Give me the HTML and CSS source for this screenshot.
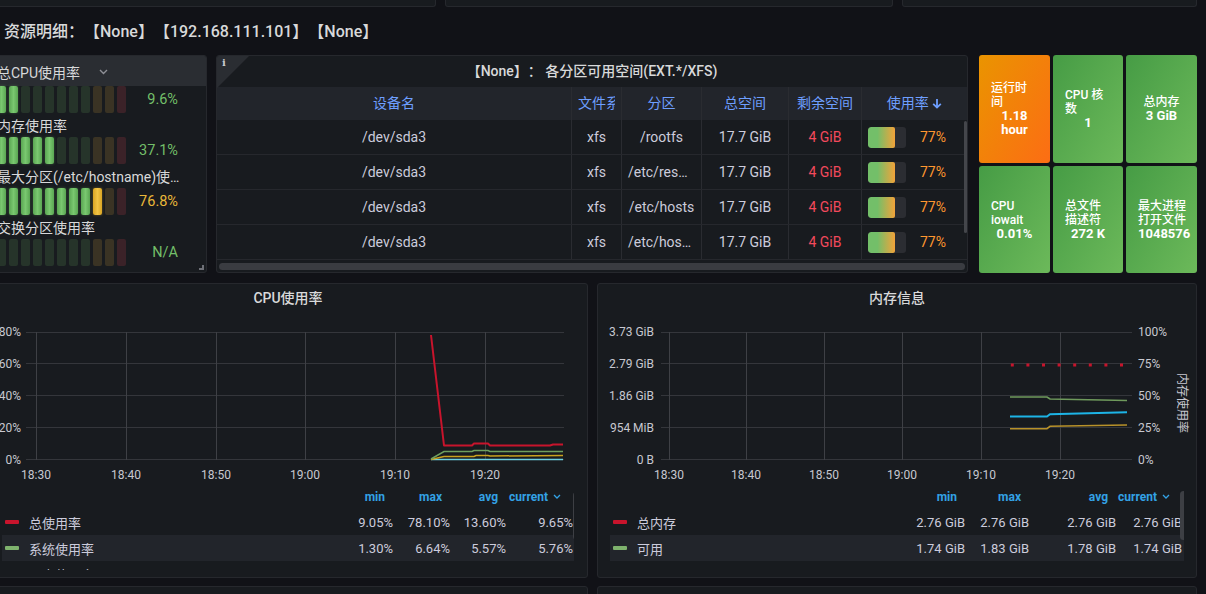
FILE: index.html
```html
<!DOCTYPE html>
<html lang="zh-CN">
<head>
<meta charset="utf-8">
<title>资源明细</title>
<link rel="stylesheet" href="styles.css">
</head>
<body>
<div class="dash">
  <div class="strip-top">
    <div class="panel stub"></div>
    <div class="panel stub"></div>
    <div class="panel stub"></div>
  </div>

  <div class="row-title">资源明细：【None】【192.168.111.101】【None】</div>

  <div class="grid1">
    <section class="panel bargauge">
      <div class="bg-header"><span>总CPU使用率</span><svg class="chev" width="9" height="6" viewBox="0 0 9 6"><polyline points="1,1 4.5,4.5 8,1" fill="none" stroke="#8e8f96" stroke-width="1.4"/></svg></div>
      <div class="bg-bar">
        <div class="cells"><i class="c gon"></i><i class="c gon"></i><i class="c g"></i><i class="c g"></i><i class="c g"></i><i class="c g"></i><i class="c g"></i><i class="c g"></i><i class="c y"></i><i class="c y"></i><i class="c r"></i></div>
        <div class="val green">9.6%</div>
      </div>
      <div class="bg-label">内存使用率</div>
      <div class="bg-bar">
        <div class="cells"><i class="c gon"></i><i class="c gon"></i><i class="c gon"></i><i class="c gon"></i><i class="c gon"></i><i class="c g"></i><i class="c g"></i><i class="c g"></i><i class="c y"></i><i class="c y"></i><i class="c r"></i></div>
        <div class="val green">37.1%</div>
      </div>
      <div class="bg-label narrow">最大分区(/etc/hostname)使用率</div>
      <div class="bg-bar">
        <div class="cells"><i class="c gon"></i><i class="c gon"></i><i class="c gon"></i><i class="c gon"></i><i class="c gon"></i><i class="c gon"></i><i class="c gon"></i><i class="c gon"></i><i class="c yon"></i><i class="c y"></i><i class="c r"></i></div>
        <div class="val yellow">76.8%</div>
      </div>
      <div class="bg-label">交换分区使用率</div>
      <div class="bg-bar">
        <div class="cells"><i class="c g"></i><i class="c g"></i><i class="c g"></i><i class="c g"></i><i class="c g"></i><i class="c g"></i><i class="c g"></i><i class="c g"></i><i class="c y"></i><i class="c y"></i><i class="c r"></i></div>
        <div class="val green">N/A</div>
      </div>
      <span class="resize"></span>
    </section>

    <section class="panel tablepanel">
      <div class="info-corner"></div>
      <span class="info-i">i</span>
      <div class="ptitle">【None】： 各分区可用空间(EXT.*/XFS)</div>
      <div class="tbl">
        <div class="trow thead">
          <div class="tc"><span class="clip">设备名</span></div>
          <div class="tc"><span class="clip">文件系统</span></div>
          <div class="tc"><span class="clip">分区</span></div>
          <div class="tc"><span class="clip">总空间</span></div>
          <div class="tc"><span class="clip">剩余空间</span></div>
          <div class="tc last"><span class="clip">使用率 <svg class="sort" width="10" height="11" viewBox="0 0 10 11"><path d="M5 1 V9.5 M1.2 5.8 L5 9.6 L8.8 5.8" fill="none" stroke="#6e9fff" stroke-width="1.8"/></svg></span></div>
        </div>
        <div class="trow">
          <div class="tc">/dev/sda3</div><div class="tc">xfs</div><div class="tc">/rootfs</div><div class="tc">17.7 GiB</div><div class="tc red">4 GiB</div>
          <div class="tc last use"><span class="ubar"><span class="ufill"></span></span><span class="upct">77%</span></div>
        </div>
        <div class="trow">
          <div class="tc">/dev/sda3</div><div class="tc">xfs</div><div class="tc">/etc/resolv.conf</div><div class="tc">17.7 GiB</div><div class="tc red">4 GiB</div>
          <div class="tc last use"><span class="ubar"><span class="ufill"></span></span><span class="upct">77%</span></div>
        </div>
        <div class="trow">
          <div class="tc">/dev/sda3</div><div class="tc">xfs</div><div class="tc">/etc/hosts</div><div class="tc">17.7 GiB</div><div class="tc red">4 GiB</div>
          <div class="tc last use"><span class="ubar"><span class="ufill"></span></span><span class="upct">77%</span></div>
        </div>
        <div class="trow">
          <div class="tc">/dev/sda3</div><div class="tc">xfs</div><div class="tc">/etc/hostname</div><div class="tc">17.7 GiB</div><div class="tc red">4 GiB</div>
          <div class="tc last use"><span class="ubar"><span class="ufill"></span></span><span class="upct">77%</span></div>
        </div>
      </div>
      <div class="hscroll"></div>
      <span class="vscroll"></span>
    </section>

    <div class="stats">
      <div class="stat orange"><div class="st"><div class="st-title">运行时<br>间</div><div class="st-val">1.18 hour</div></div></div>
      <div class="stat green-bg"><div class="st"><div class="st-title">CPU 核<br>数</div><div class="st-val">1</div></div></div>
      <div class="stat green-bg"><div class="st"><div class="st-title center">总内存</div><div class="st-val">3 GiB</div></div></div>
      <div class="stat green-bg"><div class="st"><div class="st-title">CPU<br>iowait</div><div class="st-val">0.01%</div></div></div>
      <div class="stat green-bg"><div class="st"><div class="st-title">总文件<br>描述符</div><div class="st-val">272 K</div></div></div>
      <div class="stat green-bg"><div class="st"><div class="st-title">最大进程<br>打开文件</div><div class="st-val">1048576</div></div></div>
    </div>
  </div>

  <div class="grid2">
    <section class="panel chart">
      <div class="ctitle">CPU使用率</div>
      <svg class="plot" width="598" height="173" viewBox="-11 312 598 173">
        <g class="grid">
          <line x1="26" x2="564" y1="332.5" y2="332.5"/>
          <line x1="26" x2="564" y1="363.5" y2="363.5"/>
          <line x1="26" x2="564" y1="395.5" y2="395.5"/>
          <line x1="26" x2="564" y1="427.5" y2="427.5"/>
          <line x1="26" x2="564" y1="459.5" y2="459.5"/>
          <line class="v" x1="36.5" x2="36.5" y1="332" y2="460"/>
          <line class="v" x1="126.5" x2="126.5" y1="332" y2="460"/>
          <line class="v" x1="216.5" x2="216.5" y1="332" y2="460"/>
          <line class="v" x1="305.5" x2="305.5" y1="332" y2="460"/>
          <line class="v" x1="395.5" x2="395.5" y1="332" y2="460"/>
          <line class="v" x1="485.5" x2="485.5" y1="332" y2="460"/>
        </g>
        <g class="ax" text-anchor="end">
          <text x="21" y="336">80%</text>
          <text x="21" y="367.5">60%</text>
          <text x="21" y="399.5">40%</text>
          <text x="21" y="431.5">20%</text>
          <text x="21" y="464">0%</text>
        </g>
        <g class="ax" text-anchor="middle">
          <text x="36" y="478.5">18:30</text>
          <text x="126" y="478.5">18:40</text>
          <text x="216" y="478.5">18:50</text>
          <text x="305" y="478.5">19:00</text>
          <text x="395" y="478.5">19:10</text>
          <text x="485" y="478.5">19:20</text>
        </g>
        <polyline fill="none" stroke="#6ed0e0" stroke-width="1.5" points="431,459.5 563,459.5"/>
        <polyline fill="none" stroke="#c9a11e" stroke-width="1.5" points="431,459.5 444,456.5 474,456.5 476,455.5 488,455.5 490,456 563,455.5"/>
        <polyline fill="none" stroke="#6f9f5e" stroke-width="1.5" points="431,459 444,451.5 472,451.5 474,450.5 488,450.5 490,451.5 563,451.5"/>
        <polyline fill="none" stroke="#c8142c" stroke-width="2" stroke-linejoin="round" points="431,335 444,445.5 472,445.5 474,443.5 488,443.5 490,445.5 550,445.5 553,444.5 563,444.5"/>
      </svg>
      <div class="legend cpu-leg">
        <div class="lg-row lg-head"><span></span><span>min</span><span>max</span><span>avg</span><span class="cur">current <svg width="8" height="5" viewBox="0 0 8 5"><polyline points="1,1 4,4 7,1" fill="none" stroke="#33a2e5" stroke-width="1.3"/></svg></span></div>
        <div class="lg-row"><span class="lbl"><i class="sw" style="background:#c8142c"></i>总使用率</span><span>9.05%</span><span>78.10%</span><span>13.60%</span><span>9.65%</span></div>
        <div class="lg-row hl"><span class="lbl"><i class="sw" style="background:#7eb26d"></i>系统使用率</span><span>1.30%</span><span>6.64%</span><span>5.57%</span><span>5.76%</span></div>
        <div class="lg-row"><span class="lbl"><i class="sw" style="background:#c9a11e"></i>用户使用率</span><span>2.10%</span><span>4.85%</span><span>3.92%</span><span>3.71%</span></div>
        <span class="lscroll"></span>
      </div>
    </section>

    <section class="panel chart">
      <div class="ctitle">内存信息</div>
      <svg class="plot" width="598" height="173" viewBox="598 312 598 173">
        <g class="grid">
          <line x1="661" x2="1132" y1="332.5" y2="332.5"/>
          <line x1="661" x2="1132" y1="363.5" y2="363.5"/>
          <line x1="661" x2="1132" y1="395.5" y2="395.5"/>
          <line x1="661" x2="1132" y1="427.5" y2="427.5"/>
          <line x1="661" x2="1132" y1="459.5" y2="459.5"/>
          <line class="v" x1="669.5" x2="669.5" y1="332" y2="460"/>
          <line class="v" x1="746.5" x2="746.5" y1="332" y2="460"/>
          <line class="v" x1="824.5" x2="824.5" y1="332" y2="460"/>
          <line class="v" x1="902.5" x2="902.5" y1="332" y2="460"/>
          <line class="v" x1="981.5" x2="981.5" y1="332" y2="460"/>
          <line class="v" x1="1060.5" x2="1060.5" y1="332" y2="460"/>
        </g>
        <g class="ax" text-anchor="end">
          <text x="654" y="336">3.73 GiB</text>
          <text x="654" y="367.5">2.79 GiB</text>
          <text x="654" y="399.5">1.86 GiB</text>
          <text x="654" y="431.5">954 MiB</text>
          <text x="654" y="464">0 B</text>
        </g>
        <g class="ax" text-anchor="start">
          <text x="1138" y="336">100%</text>
          <text x="1138" y="367.5">75%</text>
          <text x="1138" y="399.5">50%</text>
          <text x="1138" y="431.5">25%</text>
          <text x="1138" y="464">0%</text>
        </g>
        <g class="ax" text-anchor="middle">
          <text x="669" y="478.5">18:30</text>
          <text x="746" y="478.5">18:40</text>
          <text x="824" y="478.5">18:50</text>
          <text x="902" y="478.5">19:00</text>
          <text x="981" y="478.5">19:10</text>
          <text x="1060" y="478.5">19:20</text>
        </g>
        <text class="ax" text-anchor="middle" transform="translate(1178 403) rotate(90)">内存使用率</text>
        <g fill="#c8142c">
          <rect x="1010.8" y="363.5" width="3" height="3"/>
          <rect x="1026.4" y="363.5" width="3" height="3"/>
          <rect x="1042" y="363.5" width="3" height="3"/>
          <rect x="1057.6" y="363.5" width="3" height="3"/>
          <rect x="1073.2" y="363.5" width="3" height="3"/>
          <rect x="1088.8" y="363.5" width="3" height="3"/>
          <rect x="1104.4" y="363.5" width="3" height="3"/>
          <rect x="1120" y="363.5" width="3" height="3"/>
        </g>
        <polyline fill="none" stroke="#6f9a5c" stroke-width="1.6" points="1010,397 1047,397 1050,399 1127,400.5"/>
        <polyline fill="none" stroke="#1db4e6" stroke-width="2" points="1010,416.5 1047,416.5 1050,414.3 1127,412.3"/>
        <polyline fill="none" stroke="#b8922a" stroke-width="1.6" points="1010,428.7 1047,428.7 1050,426.3 1127,425"/>
      </svg>
      <div class="legend mem-leg">
        <div class="lg-row lg-head"><span></span><span>min</span><span>max</span><span>avg</span><span class="cur">current <svg width="8" height="5" viewBox="0 0 8 5"><polyline points="1,1 4,4 7,1" fill="none" stroke="#33a2e5" stroke-width="1.3"/></svg></span></div>
        <div class="lg-row"><span class="lbl"><i class="sw" style="background:#c8142c"></i>总内存</span><span>2.76 GiB</span><span>2.76 GiB</span><span>2.76 GiB</span><span>2.76 GiB</span></div>
        <div class="lg-row hl"><span class="lbl"><i class="sw" style="background:#7eb26d"></i>可用</span><span>1.74 GiB</span><span>1.83 GiB</span><span>1.78 GiB</span><span>1.74 GiB</span></div>
        <div class="lg-row"><span class="lbl"><i class="sw" style="background:#b8922a"></i>已用</span><span>0.92 GiB</span><span>1.01 GiB</span><span>0.97 GiB</span><span>1.01 GiB</span></div>
        <span class="lscroll"></span>
      </div>
    </section>
  </div>

  <div class="grid3">
    <div class="panel stub2"></div>
    <div class="panel stub2"></div>
  </div>
</div>
</body>
</html>
```

FILE: styles.css
```css
* { box-sizing: border-box; }
html, body { margin: 0; padding: 0; }
body {
  background: #111217;
  color: #ccccdc;
  font-family: Roboto, "Noto Sans CJK SC", "Noto Sans", sans-serif;
  width: 1206px;
  height: 594px;
  overflow: hidden;
  text-spacing-trim: space-all;
}
.dash { margin-left: -12px; width: 1209px; }

.panel {
  background: #181b1f;
  border: 1px solid #26282d;
  border-radius: 3px;
}

/* top stubs */
.strip-top {
  display: grid;
  grid-template-columns: 448px 448px 295px;
  column-gap: 9px;
  height: 7px;
}
.stub { height: 7px; border-top: none; border-radius: 0 0 3px 3px; }

.row-title {
  height: 48px;
  padding: 0 0 2px 16px;
  display: flex;
  align-items: center;
  font-size: 16px;
  font-weight: 500;
  color: #d8d9da;
  white-space: nowrap;
}

/* first grid row */
.grid1 { display: flex; height: 218px; }

.bargauge {
  width: 219px;
  margin-right: 9px;
  position: relative;
  overflow: hidden;
}
.bg-header {
  height: 30px;
  background: #2a2d32;
  display: flex;
  align-items: center;
  padding: 2px 0 0 8px;
  font-size: 14px;
  color: #d8d9da;
}
.chev { margin-left: 19px; }
.bg-label {
  height: 24px;
  padding: 3px 8px 0 8px;
  font-size: 14px;
  line-height: 20px;
  color: #d8d9da;
  white-space: nowrap;
  overflow: hidden;
  text-overflow: ellipsis;
}
.bg-label.narrow { padding-right: 22px; }
.bg-bar { height: 27px; display: flex; padding-left: 8px; }
.cells { display: flex; gap: 3px; }
.c { display: block; width: 9px; height: 27px; border-radius: 2px; }
.c.g { background: #26342a; }
.c.y { background: #3a3324; }
.c.r { background: #3b2228; }
.c.gon { background: linear-gradient(90deg, #5aa652, #7ac870 50%, #5aa652); box-shadow: 0 0 3px rgba(115,191,105,0.35); }
.c.yon { background: linear-gradient(90deg, #d9a524, #f2c444 50%, #d9a524); box-shadow: 0 0 3px rgba(234,184,57,0.4); }
.val { width: 52px; text-align: right; font-size: 14.5px; line-height: 27px; }
.val.green { color: #73bf69; }
.val.yellow { color: #eab839; }
.resize {
  position: absolute;
  right: 2px;
  bottom: 2px;
  width: 5px;
  height: 5px;
  border-right: 2px solid #6e7077;
  border-bottom: 2px solid #6e7077;
}

/* table panel */
.tablepanel {
  width: 752px;
  margin-right: 11px;
  position: relative;
  overflow: hidden;
}
.info-corner {
  position: absolute;
  top: 0;
  left: 0;
  width: 0;
  height: 0;
  border-top: 32px solid #2a2d32;
  border-right: 32px solid transparent;
}
.info-i {
  position: absolute;
  top: 1px;
  left: 5px;
  font-family: "DejaVu Serif", serif;
  font-weight: 700;
  font-size: 10px;
  color: #c8c9cf;
}
.ptitle {
  height: 31px;
  line-height: 30px;
  text-align: center;
  font-size: 14px;
  font-weight: 500;
  color: #d8d9da;
  white-space: nowrap;
}
.tbl { font-size: 14px; }
.trow {
  display: grid;
  grid-template-columns: 355px 50px 80px 87px 73px 105px;
  height: 35px;
  border-bottom: 1px solid #26282d;
}
.thead { height: 33px; background: #22252b; border-bottom: none; color: #6e9fff; }
.tc {
  border-right: 1px solid #2a2c31;
  text-align: center;
  line-height: 34px;
  padding: 0 6px;
  white-space: nowrap;
  overflow: hidden;
  text-overflow: ellipsis;
}
.thead .tc { line-height: 33px; text-overflow: clip; }
.clip { display: block; overflow: hidden; white-space: nowrap; }
.tc.last { border-right: none; }
.tc.red { color: #f2495c; }
.sort { vertical-align: -1px; }
.use { display: flex; align-items: center; text-align: left; gap: 14px; }
.ubar {
  display: block;
  width: 38px;
  height: 21px;
  background: #2b2d32;
  border-radius: 3px;
  overflow: hidden;
}
.ufill {
  display: block;
  width: 27px;
  height: 21px;
  border-radius: 3px 2px 2px 3px;
  background: linear-gradient(90deg, #73bf69 0%, #73bf69 35%, #f2a33a 100%);
}
.upct { color: #ff9830; }
.hscroll {
  margin: 3px 2px 0 2px;
  height: 7px;
  border-radius: 4px;
  background: #3a3c41;
}
.vscroll {
  position: absolute;
  right: 0;
  top: 65px;
  width: 3px;
  height: 112px;
  background: #44464b;
  border-radius: 2px;
}

/* stats */
.stats {
  display: grid;
  grid-template-columns: 71px 70px 71px;
  grid-template-rows: 108px 107px;
  gap: 3px;
}
.stat {
  border-radius: 3px;
  display: flex;
  align-items: center;
  color: #ffffff;
}
.orange { background: linear-gradient(120deg, #ea9400 0%, #fc6d14 100%); }
.green-bg { background: linear-gradient(120deg, #469c45 0%, #6cb95a 100%); }
.st { width: 100%; padding: 0 12px; text-align: center; }
.st-title { font-size: 12px; line-height: 14px; text-align: left; white-space: nowrap; font-weight: 500; }
.st-title.center { text-align: center; }
.st-val { font-size: 13px; line-height: 14px; font-weight: 700; }

/* charts */
.grid2 { display: flex; gap: 9px; height: 295px; margin-top: 10px; }
.chart { width: 600px; height: 295px; }
.ctitle {
  height: 28px;
  line-height: 28px;
  text-align: center;
  font-size: 14px;
  font-weight: 500;
  color: #d8d9da;
}
.plot { display: block; }
.grid line { stroke: #34363b; stroke-width: 1; }
.grid line.v { stroke: #3e4045; }
.ax { font-family: Roboto, "Noto Sans CJK SC", sans-serif; font-size: 12px; fill: #c7c8d0; }

.legend { height: 85px; overflow: hidden; position: relative; }
.cpu-leg { margin-left: 13px; width: 572px; }
.mem-leg { margin-left: 12px; width: 574px; }
.lg-row {
  display: grid;
  height: 26px;
  align-items: center;
  font-size: 13px;
  color: #ccccdc;
  white-space: nowrap;
}
.cpu-leg .lg-row { grid-template-columns: 333px 58px 57px 56px 67px; }
.mem-leg .lg-row { grid-template-columns: 295px 60px 64px 87px 66px; }
.lg-row > span { text-align: right; }
.lg-row > span.lbl { text-align: left; display: flex; align-items: center; }
.lg-head { height: 24px; font-size: 12px; font-weight: 700; color: #33a2e5; }
.lg-head > span { padding-right: 8px; }
.lg-head > span.cur { padding-right: 12px; }
.cur svg { vertical-align: 2px; margin-left: 2px; }
.lg-row.hl { background: #22252b; }
.sw { display: block; width: 14px; height: 4px; border-radius: 1px; margin: 0 10px 0 3px; }
.lscroll {
  position: absolute;
  top: 7px;
  right: -6px;
  width: 7px;
  height: 48px;
  border-radius: 4px;
  background: #3d3f44;
}
.mem-leg .lscroll { right: -3px; top: 6px; height: 49px; }

/* bottom stubs */
.grid3 { display: flex; gap: 9px; margin-top: 8px; }
.stub2 { width: 600px; height: 30px; }
```
